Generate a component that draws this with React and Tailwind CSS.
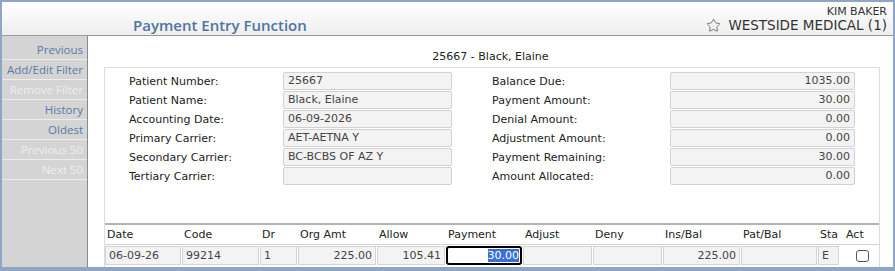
import { Star } from 'lucide-react';

const sideItems = [
  { label: 'Previous', on: true },
  { label: 'Add/Edit Filter', on: true },
  { label: 'Remove Filter', on: false },
  { label: 'History', on: true },
  { label: 'Oldest', on: true },
  { label: 'Previous 50', on: false },
  { label: 'Next 50', on: false },
];

const leftFields = [
  ['Patient Number:', '25667'],
  ['Patient Name:', 'Black, Elaine'],
  ['Accounting Date:', '06-09-2026'],
  ['Primary Carrier:', 'AET-AETNA Y'],
  ['Secondary Carrier:', 'BC-BCBS OF AZ Y'],
  ['Tertiary Carrier:', ''],
];

const rightFields = [
  ['Balance Due:', '1035.00'],
  ['Payment Amount:', '30.00'],
  ['Denial Amount:', '0.00'],
  ['Adjustment Amount:', '0.00'],
  ['Payment Remaining:', '30.00'],
  ['Amount Allocated:', '0.00'],
];

const cols = [
  { head: 'Date', w: 'w-[76px]', val: '06-09-26' },
  { head: 'Code', w: 'w-[77px]', val: '99214' },
  { head: 'Dr', w: 'w-[37px]', val: '1' },
  { head: 'Org Amt', w: 'w-[78px]', val: '225.00', right: true },
  { head: 'Allow', w: 'w-[68px]', val: '105.41', right: true },
  { head: 'Payment', w: 'w-[76px]', val: '30.00', right: true, focus: true },
  { head: 'Adjust', w: 'w-[69px]', val: '' },
  { head: 'Deny', w: 'w-[69px]', val: '' },
  { head: 'Ins/Bal', w: 'w-[77px]', val: '225.00', right: true },
  { head: 'Pat/Bal', w: 'w-[76px]', val: '' },
  { head: 'Sta', w: 'w-[21px]', val: 'E' },
];

const body = { fontFamily: '"DejaVu Sans", Verdana, sans-serif' };
const ui = { fontFamily: '"Open Sans", "Noto Sans", sans-serif' };

function Field({ value, right }) {
  return (
    <div
      className={`h-[18px] mb-[1px] bg-[#f3f3f3] border border-[#d2d2d2] rounded-[2px] px-[4px] text-[11px] leading-[16px] text-[#444] ${right ? 'text-right' : ''}`}
    >
      {value}
    </div>
  );
}

export default function App() {
  return (
    <div className="w-[895px] h-[271px] border-2 border-b-4 border-[#8fa5c4] bg-white flex flex-col overflow-hidden" style={body}>
      {/* header */}
      <div className="h-[34px] shrink-0 flex justify-between bg-gradient-to-b from-white to-[#eeeeee] border-b border-[#9a9a9a]">
        <div className="pl-[131px] pt-[13px] text-[15px] leading-[20px] font-semibold text-[#5074a2]" style={ui}>
          Payment Entry Function
        </div>
        <div className="pr-[6px] pt-[4px] flex flex-col items-end text-[#333]">
          <div className="text-[11px] leading-[12px]">KIM BAKER</div>
          <div className="flex items-center gap-[7px] text-[13.5px] leading-[15px]">
            <Star size={15} strokeWidth={1.4} className="text-[#666]" />
            <span>WESTSIDE MEDICAL (1)</span>
          </div>
        </div>
      </div>

      <div className="flex-1 flex min-h-0">
        {/* sidebar */}
        <div className="w-[86px] shrink-0 bg-[#d4d4d4] border-r border-[#8a8a8a] pt-[4px]" style={ui}>
          {sideItems.map((it) => (
            <div
              key={it.label}
              className={`h-[20px] border-b border-[#ececec] pr-[4px] text-right text-[11.5px] leading-[19px] ${it.on ? 'text-[#5a7aa6]' : 'text-[#eeeeee]'}`}
            >
              {it.label}
            </div>
          ))}
        </div>

        {/* main */}
        <div className="flex-1 min-w-0">
          <div className="h-[31px] pt-[14px] text-center text-[11px] leading-[14px] text-[#222]">25667 - Black, Elaine</div>

          <div className="ml-[16px] w-[776px] border-t border-l border-r border-[#dcdcdc] h-[200px]">
            <div className="pt-[4px] pl-[24px] flex text-[11px] text-[#222]">
              <div className="w-[154px]">
                {leftFields.map(([l]) => (
                  <div key={l} className="h-[19px] leading-[19px]">{l}</div>
                ))}
              </div>
              <div className="w-[169px]">
                {leftFields.map(([l, v]) => (
                  <Field key={l} value={v} />
                ))}
              </div>
              <div className="w-[178px] ml-[40px]">
                {rightFields.map(([l]) => (
                  <div key={l} className="h-[19px] leading-[19px]">{l}</div>
                ))}
              </div>
              <div className="w-[185px]">
                {rightFields.map(([l, v]) => (
                  <Field key={l} value={v} right />
                ))}
              </div>
            </div>

            {/* table */}
            <div className="mt-[37px] border-t-2 border-[#b4b4b4]">
              <div className="h-[20px] flex gap-[1px] border-b border-[#d4d4d4] text-[11px] leading-[20px] text-[#222]">
                {cols.map((c) => (
                  <div key={c.head} className={`${c.w} shrink-0 pl-[2px]`}>{c.head}</div>
                ))}
                <div className="w-[40px] pl-[6px]">Act</div>
              </div>
              <div className="mt-[1px] flex gap-[1px] text-[11px] text-[#444]">
                {cols.map((c) =>
                  c.focus ? (
                    <div key={c.head} className={`${c.w} shrink-0 h-[19px] border-2 border-black rounded-[3px] bg-white flex justify-end items-center pr-[1px]`}>
                      <span className="bg-[#3b6fd6] text-white leading-[13px]">{c.val}</span>
                    </div>
                  ) : (
                    <div
                      key={c.head}
                      className={`${c.w} shrink-0 h-[19px] bg-[#f3f3f3] border border-[#d4d4d4] px-[3px] leading-[17px] ${c.right ? 'text-right' : ''}`}
                    >
                      {c.val}
                    </div>
                  )
                )}
                <div className="w-[40px] flex justify-end items-center pr-[10px]">
                  <div className="w-[13px] h-[12px] border border-[#555] rounded-[3px] bg-white" />
                </div>
              </div>
            </div>
          </div>
        </div>
      </div>
    </div>
  );
}
